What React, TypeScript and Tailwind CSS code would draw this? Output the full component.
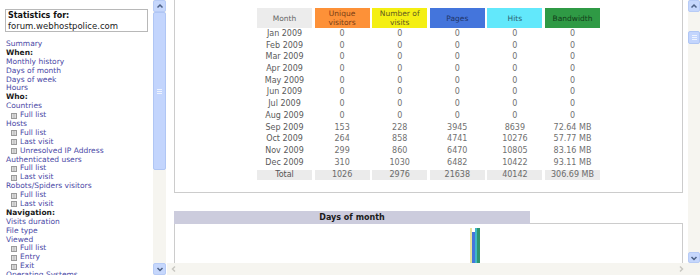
import React from 'react';

type Item = { label: string; kind: 'head' | 'link' | 'sub' };

const menu: Item[] = [
  { label: 'Summary', kind: 'link' },
  { label: 'When:', kind: 'head' },
  { label: 'Monthly history', kind: 'link' },
  { label: 'Days of month', kind: 'link' },
  { label: 'Days of week', kind: 'link' },
  { label: 'Hours', kind: 'link' },
  { label: 'Who:', kind: 'head' },
  { label: 'Countries', kind: 'link' },
  { label: 'Full list', kind: 'sub' },
  { label: 'Hosts', kind: 'link' },
  { label: 'Full list', kind: 'sub' },
  { label: 'Last visit', kind: 'sub' },
  { label: 'Unresolved IP Address', kind: 'sub' },
  { label: 'Authenticated users', kind: 'link' },
  { label: 'Full list', kind: 'sub' },
  { label: 'Last visit', kind: 'sub' },
  { label: 'Robots/Spiders visitors', kind: 'link' },
  { label: 'Full list', kind: 'sub' },
  { label: 'Last visit', kind: 'sub' },
  { label: 'Navigation:', kind: 'head' },
  { label: 'Visits duration', kind: 'link' },
  { label: 'File type', kind: 'link' },
  { label: 'Viewed', kind: 'link' },
  { label: 'Full list', kind: 'sub' },
  { label: 'Entry', kind: 'sub' },
  { label: 'Exit', kind: 'sub' },
  { label: 'Operating Systems', kind: 'link' },
];

const rows: string[][] = [
  ['Jan 2009', '0', '0', '0', '0', '0'],
  ['Feb 2009', '0', '0', '0', '0', '0'],
  ['Mar 2009', '0', '0', '0', '0', '0'],
  ['Apr 2009', '0', '0', '0', '0', '0'],
  ['May 2009', '0', '0', '0', '0', '0'],
  ['Jun 2009', '0', '0', '0', '0', '0'],
  ['Jul 2009', '0', '0', '0', '0', '0'],
  ['Aug 2009', '0', '0', '0', '0', '0'],
  ['Sep 2009', '153', '228', '3945', '8639', '72.64 MB'],
  ['Oct 2009', '264', '858', '4741', '10276', '57.77 MB'],
  ['Nov 2009', '299', '860', '6470', '10805', '83.16 MB'],
  ['Dec 2009', '310', '1030', '6482', '10422', '93.11 MB'],
];
const total = ['Total', '1026', '2976', '21638', '40142', '306.69 MB'];

const headers = [
  { label: 'Month', cls: 'bg-[#ececec] text-[#666]' },
  { label: 'Unique visitors', cls: 'bg-[#fd9138] text-[#7a3d14]' },
  { label: 'Number of visits', cls: 'bg-[#f4ef12] text-[#5f5a20]' },
  { label: 'Pages', cls: 'bg-[#4475dc] text-[#1f3468]' },
  { label: 'Hits', cls: 'bg-[#62e8fb] text-[#2c5f70]' },
  { label: 'Bandwidth', cls: 'bg-[#2f9a45] text-[#123c1a]' },
];

function Chevron({ dir, color = '#4d6185' }: { dir: 'up' | 'down' | 'left' | 'right'; color?: string }) {
  const d = {
    up: 'M2.5 6.5 L5 4 L7.5 6.5',
    down: 'M2.5 4 L5 6.5 L7.5 4',
    left: 'M6 2.5 L3.5 5 L6 7.5',
    right: 'M4 2.5 L6.5 5 L4 7.5',
  }[dir];
  return (
    <svg width="10" height="10" viewBox="0 0 10 10">
      <path d={d} fill="none" stroke={color} strokeWidth="1.5" />
    </svg>
  );
}

function BlueButton({ dir, h }: { dir: 'up' | 'down'; h: string }) {
  return (
    <div className={`${h} flex items-center justify-center rounded-[2px] bg-[#c6d7fc] border border-[#b7cbf6]`}>
      <Chevron dir={dir} />
    </div>
  );
}

function Grip() {
  return (
    <div className="flex flex-col gap-[1px] items-center">
      <div className="w-[5px] h-[1px] bg-[#eef3fe]" />
      <div className="w-[5px] h-[1px] bg-[#eef3fe]" />
      <div className="w-[5px] h-[1px] bg-[#eef3fe]" />
    </div>
  );
}

function SubIcon() {
  return (
    <svg width="6" height="6" viewBox="0 0 6 6" className="shrink-0">
      <rect x="0.5" y="0.5" width="5" height="5" fill="#f2f2f2" stroke="#9a9a9a" strokeWidth="1" />
      <path d="M1.5 2 H4.5 M1.5 4 H4.5" stroke="#8a8a8a" strokeWidth="0.8" />
    </svg>
  );
}

export default function App() {
  return (
    <div className="w-[700px] h-[275px] flex overflow-hidden bg-white font-['DejaVu_Sans','Verdana',sans-serif]">
      {/* left frame */}
      <div className="w-[167px] h-full flex shrink-0">
        <div className="w-[153px] h-full overflow-hidden pl-[5px] pt-[9px]">
          <div className="w-[143px] h-[23px] border border-[#b8b8b8] px-[2px] pt-[1px]">
            <div className="text-[8px] leading-[10px] font-bold text-[#111]">Statistics for:</div>
            <div className="text-[8.5px] leading-[10px] text-[#222]">forum.webhostpolice.com</div>
          </div>
          <div className="mt-[8px] pl-[1px]">
            {menu.map((m, i) => (
              <div key={i} className="h-[8.9px] leading-[8.9px] text-[7.5px] whitespace-nowrap">
                {m.kind === 'head' && <span className="font-bold text-[#1a1a1a]">{m.label}</span>}
                {m.kind === 'link' && <span className="text-[#4b49a6]">{m.label}</span>}
                {m.kind === 'sub' && (
                  <span className="flex items-center gap-[3px] pl-[5px] h-full text-[#4b49a6]">
                    <SubIcon />
                    {m.label}
                  </span>
                )}
              </div>
            ))}
          </div>
        </div>
        <div className="w-[13px] h-full flex flex-col bg-[#f6f5f0]">
          <BlueButton dir="up" h="h-[12px]" />
          <div className="h-[158px] rounded-[2px] bg-[#c3d5fd] border border-[#b0c6f4] flex items-center justify-center">
            <Grip />
          </div>
          <div className="flex-1" />
          <BlueButton dir="down" h="h-[12px]" />
        </div>
        <div className="w-[1px]" />
      </div>

      {/* main frame */}
      <div className="w-[533px] h-full flex flex-col">
        <div className="h-[263px] flex">
          <div className="w-[521px] h-full overflow-hidden">
            <div className="ml-[7px] w-[509px] h-[193px] border-x border-b border-[#cccccc] pt-[8px]">
              <div className="mx-auto w-[343px]">
                <div className="grid grid-cols-[55px_55px_55px_55px_55px_55px] gap-x-[2.6px]">
                  {headers.map(h => (
                    <div key={h.label} className={`h-[20px] flex items-center justify-center text-center text-[7.5px] leading-[9px] px-[6px] ${h.cls}`}>
                      {h.label}
                    </div>
                  ))}
                  {rows.map(r =>
                    r.map((c, j) => (
                      <div key={r[0] + j} className={`h-[11.7px] leading-[11.7px] text-center text-[8px] ${j === 0 ? 'text-[#5a5a5a]' : 'text-[#707070]'}`}>
                        {c}
                      </div>
                    ))
                  )}
                  {total.map((c, j) => (
                    <div key={'t' + j} className="h-[11.7px] pt-[2px]">
                      <div className={`h-[9.5px] leading-[9.5px] bg-[#ebebeb] text-center text-[8px] ${j === 0 ? 'text-[#555]' : 'text-[#6a6a6a]'}`}>
                        {c}
                      </div>
                    </div>
                  ))}
                </div>
              </div>
            </div>

            <div className="ml-[7px] w-[509px] mt-[18px]">
              <div className="flex h-[13px]">
                <div className="w-[356px] bg-[#ccccdd] text-center text-[8px] leading-[13px] font-bold text-[#1a1a1a]">Days of month</div>
                <div className="flex-1 border-b border-[#cccccc]" />
              </div>
              <div className="h-[60px] border-x border-[#cccccc] flex items-start pl-[295px] pt-[4px]">
                <div className="w-[2px] h-[60px] bg-[#e8e3a0]" />
                <div className="w-[3px] h-[60px] mt-[4px] bg-[#4475dc]" />
                <div className="w-[2px] h-[60px] bg-[#3fb8c8]" />
                <div className="w-[3px] h-[60px] bg-[#2e9670]" />
              </div>
            </div>
          </div>
          <div className="w-[12px] h-full flex flex-col bg-[#f6f5f0]">
            <BlueButton dir="up" h="h-[12px]" />
            <div className="h-[19px]" />
            <div className="h-[13px] rounded-[2px] bg-[#c3d5fd] border border-[#b0c6f4] flex items-center justify-center">
              <Grip />
            </div>
            <div className="flex-1" />
            <BlueButton dir="down" h="h-[11px]" />
          </div>
        </div>
        <div className="h-[12px] flex bg-[#f6f5f0]">
          <div className="w-[521px] flex items-center justify-between px-[2px]">
            <Chevron dir="left" color="#c9c8c2" />
            <Chevron dir="right" color="#c9c8c2" />
          </div>
          <div className="w-[12px]" />
        </div>
      </div>
    </div>
  );
}
